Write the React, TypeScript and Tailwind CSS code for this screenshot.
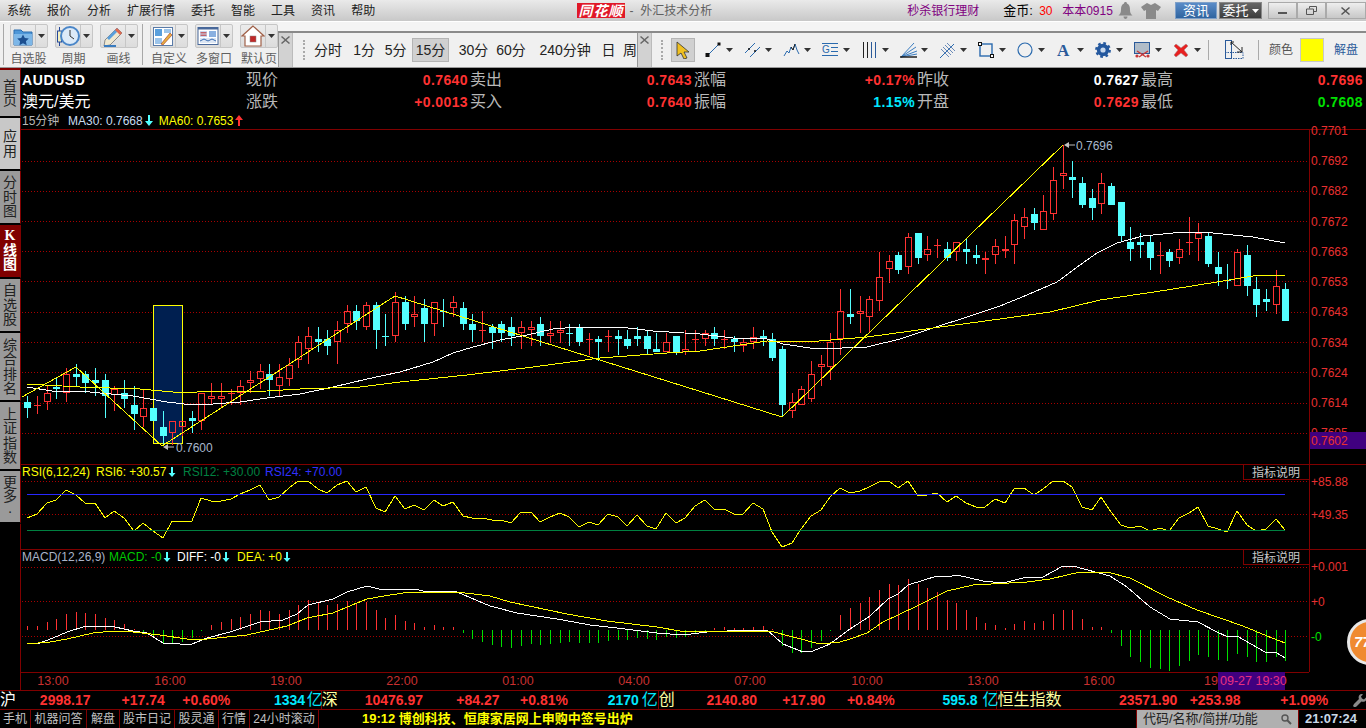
import React from "react";

// [type 0 red hollow / 1 cyan filled, bodyTop, bodyBottom, wickTop, wickBottom]
const C: number[][] = [
[1,402,408,396,418],[0,405,405,396,414],[0,393,402,386,410],[1,387,389,377,399],[0,374,393,368,402],[1,374,377,364,386],[1,374,383,371,393],[1,380,383,368,396],[1,380,396,374,418],[0,389,395,386,411],
[1,393,399,380,408],[1,405,414,386,430],[0,408,417,390,427],[1,408,421,408,421],[1,427,436,411,446],[0,421,433,421,445],[0,421,427,421,436],[1,418,421,411,433],[0,393,421,393,430],[0,396,399,383,405],
[0,396,399,383,408],[0,393,393,389,405],[0,386,393,380,405],[0,380,383,371,393],[0,371,379,364,389],[1,374,380,364,396],[0,377,386,364,396],[0,365,379,358,386],[0,342,360,336,368],[0,336,349,327,364],
[1,339,342,327,352],[1,339,346,330,355],[0,330,342,321,364],[0,311,324,305,333],[1,311,321,305,330],[0,305,327,302,330],[1,305,330,302,349],[1,336,336,314,346],[0,302,336,292,342],[1,302,324,296,330],
[0,314,317,296,327],[1,308,324,299,342],[0,302,324,302,336],[1,311,311,299,327],[0,302,308,296,317],[1,308,324,302,330],[1,324,330,314,342],[0,330,330,311,342],[1,327,333,324,349],[1,324,333,321,342],
[1,327,336,317,346],[0,327,333,321,349],[0,327,330,321,346],[1,324,336,317,346],[0,333,336,321,343],[0,330,333,321,343],[1,333,333,324,346],[1,327,342,324,346],[0,339,339,333,355],[1,339,342,336,361],
[0,336,336,330,352],[1,336,339,330,355],[1,339,346,330,349],[1,336,339,327,346],[1,336,349,330,355],[1,349,352,333,352],[0,342,352,333,352],[1,336,352,336,355],[0,349,352,330,355],[0,339,339,330,352],
[0,333,339,330,346],[1,333,339,327,346],[0,339,339,330,349],[1,339,342,336,352],[0,342,346,339,352],[0,337,342,327,349],[1,336,339,330,346],[1,339,358,333,361],[1,349,405,346,417],[0,402,411,393,418],
[0,389,405,386,405],[0,374,399,361,402],[0,364,367,355,386],[0,342,367,333,380],[0,311,339,289,355],[1,314,317,289,324],[0,311,314,296,333],[0,299,317,296,333],[0,277,301,252,311],[0,261,269,255,283],
[1,255,270,252,274],[0,237,267,233,274],[1,233,258,233,264],[0,249,255,236,261],[0,245,245,239,258],[1,249,258,242,261],[0,242,252,242,261],[1,249,252,239,264],[1,255,258,245,264],[0,258,260,252,274],
[0,246,255,239,264],[0,249,251,236,258],[0,220,245,214,264],[0,217,227,208,239],[1,214,223,208,230],[0,211,230,195,230],[0,180,214,167,220],[0,173,176,145,189],[1,177,180,161,198],[1,183,205,177,208],
[1,198,208,189,220],[0,183,204,173,214],[1,186,205,183,205],[1,202,236,202,241],[1,242,249,227,261],[1,242,245,233,258],[1,242,258,236,270],[0,255,255,242,274],[1,252,261,249,267],[0,249,258,239,264],
[0,242,242,217,255],[0,233,239,223,261],[1,236,264,233,267],[1,267,274,252,286],[1,280,280,264,289],[0,252,286,249,286],[1,255,286,245,296],[1,289,305,277,317],[1,299,302,289,311],[0,286,305,270,314],
[1,289,321,283,321],
];

const RSI = [518,514,503,500,490,495,503,503,518,511,518,531,523,531,538,521,521,521,498,501,501,499,494,490,485,500,497,488,481,481,489,493,485,481,492,487,508,512,496,509,505,510,500,506,502,516,518,518,520,520,523,512,512,522,517,513,517,527,522,525,514,517,526,515,526,529,513,523,518,506,500,509,509,514,514,503,509,532,547,543,529,516,510,497,488,493,491,487,482,481,488,481,496,495,493,502,496,503,507,507,499,503,489,488,495,489,481,481,487,507,510,497,512,525,528,526,531,528,531,518,513,507,526,529,532,511,525,531,529,519,530];

// signed heights from the baseline at y=630: positive red, negative green
const H = [4,4,8,11,16,18,17,16,12,10,6,1,-4,-6,-13,-13,-12,-8,-1,5,8,11,13,16,20,19,16,20,25,30,28,25,26,29,26,28,20,12,15,9,7,3,5,3,3,-3,-9,-12,-15,-17,-18,-16,-14,-15,-14,-13,-12,-13,-13,-13,-11,-10,-10,-8,-9,-10,-7,-8,-7,-4,-1,2,3,2,2,3,4,1,-16,-23,-23,-18,-11,-1,15,22,27,33,40,46,45,51,46,42,38,30,27,20,13,7,5,2,6,9,7,9,16,20,20,11,3,3,-3,-16,-27,-32,-38,-39,-41,-36,-31,-25,-27,-30,-31,-24,-27,-32,-32,-27,-31];

const MA30 = "27,387 52,391 80,391 100,393 133,396 167,402 193,405 213,404 240,402 267,398 300,394 333,387 367,379 400,372 433,362 453,353 473,347 500,340 527,335 553,329 577,327 620,327 653,331 700,334 733,338 767,339 783,344 817,349 867,347 900,339 933,328 967,317 1000,306 1027,295 1057,282 1080,265 1097,253 1117,243 1143,236 1183,232 1213,233 1253,237 1285,243";
const MA60 = "27,384 80,387 140,389 173,392 197,392 267,391 300,389 360,387 400,382 467,375 533,367 600,358 667,353 700,351 767,341 807,342 867,337 933,328 1000,319 1050,312 1100,300 1167,290 1217,282 1253,276 1285,275";
const ZIG = "22,397 76,367 162,446 395,296 782,417 1063,145";
const DIFF = "27,643 40,643 53,638 67,632 83,627 95,626 115,627 133,631 147,633 163,643 180,644 192,644 207,638 230,632 260,622 283,620 297,614 308,605 333,599 347,592 367,586 383,590 390,589 415,589 423,591 433,591 457,592 490,606 517,613 537,616 563,620 590,625 617,628 657,633 683,635 707,632 747,630 767,630 783,644 803,652 813,651 830,644 850,629 870,616 888,599 898,594 908,585 937,576 947,577 957,575 983,581 1003,583 1023,578 1043,577 1063,566 1073,566 1110,576 1127,587 1150,607 1170,619 1198,622 1217,632 1228,637 1237,636 1265,652 1277,653 1285,658";
const DEA = "27,644 50,642 67,639 93,633 113,631 133,632 160,635 187,639 207,639 247,635 287,626 307,618 333,613 357,603 367,599 390,595 410,592 457,592 490,596 510,602 567,614 607,621 657,627 680,631 770,631 793,637 820,644 840,642 850,639 867,633 883,622 917,606 947,591 973,585 1027,582 1050,579 1080,572 1107,572 1130,578 1167,597 1197,610 1243,626 1267,636 1285,643";

const cx = (i: number) => Math.round(27.3 + i * 9.677);
const RED = "#ff3232";
const CYAN = "#54ffff";
const DARK = "#800000";
const DOT = "#a80000";

function Arrow({ x, y, color, up = false }: { x: number; y: number; color: string; up?: boolean }) {
  const d = up
    ? `M${x} ${y - 5}l3.5 4h-2.5v6h-2v-6h-2.5z`
    : `M${x} ${y + 5}l3.5 -4h-2.5v-6h-2v6h-2.5z`;
  return <path d={d} fill={color} />;
}

function Chart() {
  const axis: [string, number][] = [["0.7701", 130], ["0.7692", 160], ["0.7682", 190], ["0.7672", 221], ["0.7663", 251], ["0.7653", 281], ["0.7643", 311], ["0.7634", 342], ["0.7624", 372], ["0.7614", 402]];
  const grid = [161, 191, 221, 251, 281, 312, 342, 372, 403, 433];
  const times: [string, number][] = [["13:00", 53], ["16:00", 170], ["19:00", 286], ["22:00", 402], ["01:00", 518], ["04:00", 634], ["07:00", 750], ["10:00", 867], ["13:00", 983], ["16:00", 1099]];
  return (
    <svg viewBox="21 129 1345 561" width={1345} height={561} className="block overflow-visible" fontSize={12}>
      <g shapeRendering="crispEdges" strokeWidth={1}>
        {grid.map((y) => <line key={y} x1={22} x2={1309} y1={y + 0.5} y2={y + 0.5} stroke={DOT} strokeDasharray="1 2" />)}
        {[481, 514, 567, 601, 636].map((y) => <line key={y} x1={22} x2={1309} y1={y + 0.5} y2={y + 0.5} stroke={DOT} strokeDasharray="1 2" />)}
        {[129, 464, 549, 672].map((y) => <line key={y} x1={21} x2={y === 672 ? 1309 : 1366} y1={y + 0.5} y2={y + 0.5} stroke={DARK} />)}
        <line x1={1309.5} x2={1309.5} y1={129} y2={672} stroke={DARK} />
      </g>
      <rect x={153.5} y={305.5} width={29} height={138} fill="#001f50" stroke="#ffff00" shapeRendering="crispEdges" />
      <g shapeRendering="crispEdges">
        {C.map(([t, a, b, w1, w2], i) => {
          const x = cx(i);
          const col = t ? CYAN : RED;
          const doji = a === b;
          return (
            <g key={i}>
              {w1 < a && <rect x={x} y={w1} width={1} height={a - w1} fill={col} />}
              {w2 > b && <rect x={x} y={b} width={1} height={w2 - b} fill={col} />}
              {doji ? (
                <rect x={x - 3} y={a} width={7} height={1} fill={col} />
              ) : t ? (
                <rect x={x - 3} y={a} width={7} height={b - a} fill={col} />
              ) : (
                <rect x={x - 2.5} y={a + 0.5} width={6} height={b - a - 1} fill="none" stroke={col} />
              )}
            </g>
          );
        })}
      </g>
      <g fill="none" shapeRendering="crispEdges">
        <polyline points={MA30} stroke="#ffffff" />
        <polyline points={MA60} stroke="#ffff00" />
        <polyline points={ZIG} stroke="#ffff00" />
      </g>
      <g fill="#a8b8cc" stroke="none">
        <path d="M1064 145l5 -3v2.5h6v1h-6v2.5z" fill="#c0c0c0" />
        <text x={1076} y={149.5}>0.7696</text>
        <path d="M163 447l5 -3v2.5h6v1h-6v2.5z" fill="#c0c0c0" />
        <text x={176} y={451.5}>0.7600</text>
      </g>
      <text x={1311} y={437} fill="#e83030">0.7605</text>
      <rect x={1310} y={432} width={56} height={17} fill="#400080" />
      <g fill="#e83030">
        {axis.map(([t, y]) => <text key={t} x={1311} y={y + 4.5}>{t}</text>)}
        <text x={1311} y={445}>0.7602</text>
        <text x={1311} y={485.5}>+85.88</text>
        <text x={1311} y={518.5}>+49.35</text>
        <text x={1311} y={570.5}>+0.001</text>
        <text x={1311} y={605.5}>+0</text>
      </g>
      <text x={1311} y={640.5} fill="#00e000">-0</text>

      <rect x={1243.5} y={464.5} width={66} height={15} fill="#000" stroke={DARK} shapeRendering="crispEdges" />
      <text x={1252} y={477} fill="#c8c8c8">指标说明</text>
      <rect x={1243.5} y={549.5} width={66} height={15} fill="#000" stroke={DARK} shapeRendering="crispEdges" />
      <text x={1252} y={562} fill="#c8c8c8">指标说明</text>

      <polyline points={RSI.map((y, i) => `${cx(i)},${y}`).join(" ")} fill="none" stroke="#ffff00" shapeRendering="crispEdges" />
      <g shapeRendering="crispEdges">
        <line x1={27} x2={1285} y1={494.5} y2={494.5} stroke="#2828ff" />
        <line x1={27} x2={1285} y1={530.5} y2={530.5} stroke="#008040" />
      </g>
      <text x={22} y={476} fill="#ffff00">RSI(6,12,24)</text>
      <text x={96} y={476} fill="#ffff00">RSI6: +30.57</text>
      <Arrow x={172} y={472} color={CYAN} />
      <text x={183} y={476} fill="#008040">RSI12: +30.00</text>
      <text x={265} y={476} fill="#3030ff">RSI24: +70.00</text>

      <g shapeRendering="crispEdges">
        {H.map((h, i) =>
          h >= 0 ? (
            <rect key={i} x={cx(i)} y={630 - h} width={1} height={h} fill={RED} />
          ) : (
            <rect key={i} x={cx(i)} y={630} width={1} height={-h} fill="#00e000" />
          )
        )}
        <polyline points={DIFF} fill="none" stroke="#ffffff" />
        <polyline points={DEA} fill="none" stroke="#ffff00" />
      </g>
      <text x={22} y={561} fill="#aab4c8">MACD(12,26,9)</text>
      <text x={109} y={561} fill="#00c800">MACD: -0</text>
      <Arrow x={167} y={557} color={CYAN} />
      <text x={177} y={561} fill="#ffffff">DIFF: -0</text>
      <Arrow x={226} y={557} color={CYAN} />
      <text x={237} y={561} fill="#ffff00">DEA: +0</text>
      <Arrow x={287} y={557} color={CYAN} />

      <g fill="#c83030" textAnchor="middle" fontSize={12.5}>
        {times.map(([t, x]) => <text key={x} x={x} y={685}>{t}</text>)}
        <text x={1204} y={685} textAnchor="start">19:</text>
      </g>
      <rect x={1218} y={672} width={67} height={18} fill="#400080" />
      <text x={1220} y={685} fill="#e83080" fontSize={12.5}>09-27 19:30</text>
    </svg>
  );
}

const Caret = () => <svg width={7} height={4} viewBox="0 0 7 4"><path d="M0 0h7l-3.5 4z" fill="#333" /></svg>;

function BigButton({ icon, label }: { icon: React.ReactNode; label: string }) {
  return (
    <div className="flex flex-col items-center w-[38px]">
      <div className="flex h-[25px] w-[38px] border border-[#c6c6c6] rounded-[2px] bg-gradient-to-b from-[#ececec] to-[#dcdcdc]">
        <div className="w-[25px] flex items-center justify-center border-r border-[#c6c6c6]">{icon}</div>
        <div className="flex-1 flex items-center justify-center"><Caret /></div>
      </div>
      <div className="mt-[3px] text-[12px] leading-[16px] text-[#606060] whitespace-nowrap">{label}</div>
    </div>
  );
}

const IconFolder = (
  <svg width={22} height={21} viewBox="0 0 22 21"><path d="M2 4h7l2 2h9v13H2z" fill="#4e97d8" stroke="#2a6cae" /><path d="M2 8h18v11H2z" fill="#7db7e8" /><path d="M11 8.5l1.8 3.6 4 .5-2.9 2.7.8 3.9-3.7-2-3.6 2 .7-3.9-2.9-2.7 4-.5z" fill="#1c4f90" /></svg>
);
const IconClock = (
  <svg width={24} height={22} viewBox="0 0 24 22"><rect x={1.5} y={6} width={4} height={11} fill="#f4f0c0" stroke="#24489a" /><path d="M3.5 2v4M3.5 17v4" stroke="#24489a" /><circle cx={14} cy={11} r={9} fill="#dceaf8" stroke="#4a86c8" strokeWidth={2} /><path d="M14 5v6l4 3" fill="none" stroke="#333" /></svg>
);
const IconPen = (
  <svg width={22} height={21} viewBox="0 0 22 21"><path d="M3 14L15 2l5 5L8 19l-6 1z" fill="#f0e8d0" stroke="#8a8a8a" /><path d="M5 12L15 2l2 2L7 14z" fill="#5a9fdc" /><path d="M15 2l5 5-2 2-5-5z" fill="#e06a50" /><path d="M2 20h12" stroke="#3a7cc0" strokeWidth={2} /></svg>
);
const IconCustom = (
  <svg width={22} height={21} viewBox="0 0 22 21"><rect x={1.5} y={1.5} width={19} height={18} fill="#fff" stroke="#5a7ba8" /><rect x={3} y={3} width={7} height={7} fill="#5a9fdc" /><rect x={12} y={3} width={7} height={4} fill="#9cc4ea" /><rect x={3} y={12} width={7} height={6} fill="#9cc4ea" /><path d="M9 18l9-11 2 2-9 10z" fill="#e8b040" stroke="#a03020" strokeWidth={0.6} /></svg>
);
const IconWindows = (
  <svg width={22} height={20} viewBox="0 0 22 20"><rect x={1} y={1.5} width={20} height={17} fill="#fff" stroke="#48689a" /><rect x={1} y={1.5} width={20} height={2} fill="#48689a" /><rect x={3} y={5} width={7} height={6} fill="#c8d8f0" /><path d="M3.5 6.5h6M3.5 8h6M3.5 9.5h6" stroke="#c03030" strokeWidth={0.7} /><rect x={12} y={5} width={7} height={6} fill="#8ab0e0" /><rect x={3} y={12} width={16} height={5} fill="#dce6f4" /><path d="M3 15l4-2 4 2 4-2 4 2" stroke="#3a6cb0" fill="none" /></svg>
);
const IconHome = (
  <svg width={24} height={22} viewBox="0 0 24 22"><path d="M12 1L1 11h3v10h16V11h3z" fill="#fff" stroke="#a06048" strokeWidth={1.2} /><rect x={9} y={11} width={6} height={6} fill="#c02828" stroke="#888" strokeWidth={0.5} /></svg>
);

const tools: React.ReactNode[] = [
  <svg width={17} height={16} viewBox="0 0 17 16" key="a"><path d="M3 13L14 2" stroke="#2a6aae" /><rect x={0.5} y={11} width={4} height={4} fill="#111" /><rect x={12.5} y={0.5} width={3} height={3} fill="#111" /></svg>,
  <svg width={17} height={16} viewBox="0 0 17 16" key="b"><path d="M1 11L11 1M6 15L16 5" stroke="#2a6aae" /><circle cx={5} cy={7} r={1} fill="#111" /><circle cx={11} cy={9} r={1} fill="#111" /></svg>,
  <svg width={17} height={16} viewBox="0 0 17 16" key="c"><path d="M1 14L4 9l2 2 2-6 2 3 2-6 2 6 2 4" fill="none" stroke="#2a6aae" /><path d="M8 5l2 3 2-6" fill="none" stroke="#222" /></svg>,
  <svg width={16} height={16} viewBox="0 0 16 16" key="d"><path d="M0 1.5h16M9 5.5h7M9 9.5h7M0 13.5h16" stroke="#2a6aae" /><text x={0} y={11} fontSize={10} fill="#2a6aae">G</text></svg>,
  <svg width={15} height={16} viewBox="0 0 15 16" key="e"><path d="M1.5 0v16M5.5 0v16" stroke="#222" /><path d="M9.5 0v16M13.5 0v16" stroke="#2a5a9a" /></svg>,
  <svg width={17} height={16} viewBox="0 0 17 16" key="f"><path d="M1 15L14 1M1 15L16 5M1 15L17 9M1 15L17 12" stroke="#3a7cc0" /><path d="M0 15h17" stroke="#111" strokeWidth={1.4} /></svg>,
  <svg width={17} height={17} viewBox="0 0 17 17" key="g"><path d="M1 16L15 2" stroke="#2a6aae" /><path d="M4 5l8 8M6 3l8 8M8 1l8 8M2 7l8 8" stroke="#6a8ab8" /></svg>,
  <svg width={16} height={16} viewBox="0 0 16 16" key="h"><rect x={2} y={2} width={12} height={12} fill="none" stroke="#2a6aae" strokeWidth={1.4} /><rect x={0.5} y={0.5} width={3} height={3} fill="#fff" stroke="#111" /><rect x={12.5} y={12.5} width={3} height={3} fill="#fff" stroke="#111" /></svg>,
  <svg width={16} height={16} viewBox="0 0 16 16" key="i"><circle cx={8} cy={8} r={7} fill="none" stroke="#2a6aae" strokeWidth={1.2} /></svg>,
  <svg width={16} height={18} viewBox="0 0 16 18" key="j"><text x={1} y={15} fontSize={17} fontWeight={700} fontFamily="'Liberation Serif',serif" fill="#2a5a9a">A</text></svg>,
  <svg width={16} height={16} viewBox="0 0 16 16" key="k"><circle cx={8} cy={8} r={6.2} fill="#24589e" /><circle cx={8} cy={8} r={6.6} fill="none" stroke="#24589e" strokeWidth={2.6} strokeDasharray="2.6 2.6" /><circle cx={8} cy={8} r={2.6} fill="#c8d8ec" /></svg>,
  <svg width={17} height={16} viewBox="0 0 17 16" key="l"><rect x={0.5} y={0.5} width={15} height={11} fill="#b0bcc8" stroke="#2a5a9a" /><path d="M3 9l9 6M14 9l-9 6" stroke="#c83838" strokeWidth={1.5} /><circle cx={3} cy={14} r={1.6} fill="#c83838" /><circle cx={14} cy={14} r={1.6} fill="#c83838" /></svg>,
  <svg width={16} height={16} viewBox="0 0 16 16" key="m"><path d="M3 2l5 4 5-4 2 2-4 4 4 5-2 2-5-4-5 4-2-2 4-5-4-4z" fill="#e82020" stroke="#a08080" strokeWidth={0.5} /></svg>,
];

const stats: [string, string][] = [
  ["沪", "w-[40px] text-[16px] font-normal text-white"],
  ["2998.17", "w-[82px]"],
  ["+17.74", "w-[61px]"],
  ["+0.60%", "w-[92px]"],
  ["1334", "w-[33px] text-[#00e8ff]"],
  ["亿", "w-[15px] text-[16px] font-normal text-[#00e8ff] border-r border-[#800000]"],
  ["深", "w-[43px] text-[16px] font-normal text-[#ffffa0]"],
  ["10476.97", "w-[92px]"],
  ["+84.27", "w-[64px]"],
  ["+0.81%", "w-[88px]"],
  ["2170", "w-[34px] text-[#00e8ff]"],
  ["亿", "w-[17px] text-[16px] font-normal text-[#00e8ff] border-r border-[#800000]"],
  ["创", "w-[48px] text-[16px] font-normal text-[#ffffa0]"],
  ["2140.80", "w-[76px]"],
  ["+17.90", "w-[65px]"],
  ["+0.84%", "w-[96px]"],
  ["595.8", "w-[40px] text-[#00e8ff]"],
  ["亿", "w-[15px] text-[16px] font-normal text-[#00e8ff] border-r border-[#800000]"],
  ["恒生指数", "w-[122px] text-[16px] font-normal text-[#ffffa0]"],
  ["23571.90", "w-[71px]"],
  ["+253.98", "w-[91px]"],
  ["+1.09%", "w-[66px]"],
];

const tabs: [string, string][] = [
  ["手机", "w-[31px]"],
  ["机器问答", "w-[56px]"],
  ["解盘", "w-[33px]"],
  ["股市日记", "w-[55px]"],
  ["股灵通", "w-[44px]"],
  ["行情", "w-[31px]"],
  ["24小时滚动", "w-[69px]"],
];

function SideTab({ text, cls }: { text: string; cls: string }) {
  return (
    <div className={`flex flex-col items-center justify-center text-[14px] leading-[14.5px] border-r border-[#800000] border-b-2 border-b-black ${cls}`}>
      {Array.from(text).map((c, i) => <span key={i}>{c}</span>)}
    </div>
  );
}

function QCell({ label, value, color }: { label: string; value: string; color: string }) {
  return (
    <div className="flex items-center justify-between pr-[2px]">
      <span className="text-[16px] text-[#b8b8b8]">{label}</span>
      <span className={`text-[14px] font-bold tracking-[0.4px] ${color}`}>{value}</span>
    </div>
  );
}

export default function App() {
  return (
    <div className="relative w-[1366px] h-[728px] overflow-hidden bg-black flex flex-col font-['Liberation_Sans','Noto_Sans_CJK_SC',sans-serif]">
      {/* title / menu bar */}
      <div className="h-[21px] flex items-center bg-gradient-to-b from-[#eaeaea] to-[#c8c8c8] text-[12px] text-[#222]">
        <div className="flex gap-4 pl-[7px] w-[577px]">
          {["系统", "报价", "分析", "扩展行情", "委托", "智能", "工具", "资讯", "帮助"].map((m) => <span key={m}>{m}</span>)}
        </div>
        <span className="w-[49px] h-[15px] flex items-center justify-center bg-[#e01828] text-white italic font-bold text-[14px] leading-none tracking-[1px]">同花顺</span>
        <span className="ml-[4px] w-[278px] text-[12px] text-[#606060] whitespace-pre">-  外汇技术分析</span>
        <span className="w-[96px] text-[#800080] text-[12px]">秒杀银行理财</span>
        <span className="w-[36px] text-black text-[13px] whitespace-nowrap">金币:</span>
        <span className="w-[23px] text-[#ff0000] text-[12px]">30</span>
        <span className="w-[56px] text-[#800080] text-[12px] whitespace-nowrap">本本0915</span>
        <svg width={15} height={17} viewBox="0 0 15 17" className="mr-[8px]"><path d="M7.5 0c1 0 1.5.6 1.5 1.5C11.500 2.500 12 5 12 8c0 3 1 4 2.500 5.500H.5C2 12 3 11 3 8c0-3 .5-5.500 3-6.500C6 .6 6.500 0 7.500 0zM5.500 14.500h4c0 1.500-1 2.500-2 2.500s-2-1-2-2.500z" fill="#8a8a8a" /></svg>
        <svg width={20} height={16} viewBox="0 0 20 16" className="mr-[14px]"><path d="M6 0l4 2 4-2 6 4-3 4-2-1v9H5V7L3 8 0 4z" fill="#8a8a8a" /></svg>
        <div className="w-[42px] h-[17px] flex items-center justify-center bg-gradient-to-b from-[#5a8cc8] to-[#2f649f] border border-[#7fa0c8] text-white text-[13px] mr-[2px]">资讯</div>
        <div className="w-[43px] h-[17px] flex items-center justify-center gap-[3px] bg-gradient-to-b from-[#666666] to-[#3c3c3c] border border-[#888] text-white text-[13px] mr-[6px]">
          委托<svg width={7} height={4} viewBox="0 0 7 4"><path d="M0 0h7l-3.500 4z" fill="#fff" /></svg>
        </div>
        <div className="flex h-[17px]">
          <div className="w-[29px] flex items-center justify-center border border-[#aaa] bg-gradient-to-b from-[#eeeeee] to-[#c8c8c8]"><div className="w-[9px] h-[2px] mt-[5px] bg-[#555]" /></div>
          <div className="w-[29px] flex items-center justify-center border border-[#aaa] bg-gradient-to-b from-[#eeeeee] to-[#c8c8c8]"><svg width={11} height={9} viewBox="0 0 11 9"><path d="M3.500 2.500V.5h7v5h-3M.5 3h7v5.500h-7z" fill="none" stroke="#555" /></svg></div>
          <div className="w-[40px] flex items-center justify-center border border-[#aaa] bg-gradient-to-b from-[#eeeeee] to-[#c8c8c8]"><svg width={9} height={8} viewBox="0 0 9 8"><path d="M1 0l3.500 3L8 0l1 1-3.500 3L9 7l-1 1-3.500-3L1 8 0 7l3.500-3L0 1z" fill="#555" /></svg></div>
        </div>
      </div>

      {/* tool bars */}
      <div className="h-[47px] flex bg-[#f4f4f4] border-t border-white border-b border-b-[#9a9a9a]">
        <div className="w-[278px] flex pl-[3px] pt-[2px] gap-[7px] bg-[#f0f0f0]">
          <div className="w-px bg-[#a8a8a8] h-[41px] mr-[-1px]" />
          <BigButton icon={IconFolder} label="自选股" />
          <BigButton icon={IconClock} label="周期" />
          <BigButton icon={IconPen} label="画线" />
          <div className="w-px bg-[#a8a8a8] h-[41px] ml-[-3px] mr-px" />
          <BigButton icon={IconCustom} label="自定义" />
          <BigButton icon={IconWindows} label="多窗口" />
          <BigButton icon={IconHome} label="默认页" />
        </div>
        <div className="flex-1 flex flex-col">
          <div className="h-[9px] bg-[#f4f4f4]" />
          <div className="flex-1 flex bg-[#f0f0f0] border-t-2 border-[#8a8a8a]">
            <div className="w-[359px] flex items-center border-l border-[#999]">
              <div className="w-[14px] h-full flex justify-center pt-[3px] bg-[#d2d2d2] border-r border-[#bbb]">
                <svg width={9} height={8} viewBox="0 0 9 8"><path d="M1 0l3.500 3L8 0l1 1-3.500 3L9 7l-1 1-3.500-3L1 8 0 7l3.500-3L0 1z" fill="#666" /></svg>
              </div>
              <div className="ml-[10px] w-[2px] h-[20px] border-l-2 border-dotted border-[#aaa]" />
              <div className="flex items-center text-[14px] text-[#222] ml-[9px] whitespace-nowrap overflow-hidden w-[324px]">
                <span className="w-[40px]">分时</span>
                <span className="w-[32px]">1分</span>
                <span className="w-[28px]">5分</span>
                <span className="w-[37px] h-[24px] mr-[10px] flex items-center justify-center bg-[#d0d0d0] border border-[#b4b4b4]">15分</span>
                <span className="w-[38px]">30分</span>
                <span className="w-[44px]">60分</span>
                <span className="w-[63px]">240分钟</span>
                <span className="w-[22px]">日</span>
                <span>周</span>
              </div>
            </div>
            <div className="flex-1 flex items-center border-l border-[#999]">
              <div className="w-[14px] h-full flex justify-center pt-[3px] bg-[#d2d2d2] border-r border-[#bbb]">
                <svg width={9} height={8} viewBox="0 0 9 8"><path d="M1 0l3.500 3L8 0l1 1-3.500 3L9 7l-1 1-3.500-3L1 8 0 7l3.500-3L0 1z" fill="#666" /></svg>
              </div>
              <div className="ml-[9px] w-[2px] h-[20px] border-l-2 border-dotted border-[#aaa]" />
              <div className="ml-[8px] w-[24px] h-[24px] flex items-center justify-center bg-[#d0d0d0] border border-[#b4b4b4]">
                <svg width={14} height={18} viewBox="0 0 14 18"><path d="M1 1l12 10H8l3 6-3 1-3-6-4 3z" fill="#f0c020" stroke="#333" strokeWidth={0.8} /></svg>
              </div>
              <div className="flex ml-[7px]">
                {tools.map((t) => (
                  <div key={(t as React.ReactElement).key} className="w-[39px] flex items-center gap-[2px]">
                    <div className="w-[22px] flex justify-center">{t}</div>
                    <Caret />
                  </div>
                ))}
              </div>
              <div className="w-px h-[20px] bg-[#aaa] ml-[-1px]" />
              <svg width={19} height={20} viewBox="0 0 19 20" className="ml-[16px]"><rect x={0.5} y={0.5} width={6} height={18} fill="none" stroke="#2a5a9a" /><path d="M0 12.500h18v6H0" fill="none" stroke="#2a5a9a" strokeDasharray="1.500 1" /><path d="M6 2l11 10M17 7v5h-5M6 2v3M6 2h3" fill="none" stroke="#222" /></svg>
              <div className="w-px h-[20px] bg-[#aaa] ml-[14px]" />
              <span className="ml-[10px] text-[12px] text-[#555] whitespace-nowrap">颜色</span>
              <div className="ml-[7px] w-[24px] h-[24px] bg-[#ffff00] border border-[#c8c8c8]" />
              <span className="ml-[10px] text-[12px] text-[#2a5a9a] whitespace-nowrap">解盘</span>
            </div>
          </div>
        </div>
      </div>

      {/* main */}
      <div className="flex flex-1 min-h-0">
        <div className="w-[21px] flex flex-col shrink-0 text-[#222] border-t-2 border-[#800000]">
          <SideTab text="首页" cls="h-[48px] bg-[#a8a8a8]" />
          <SideTab text="应用" cls="h-[53px] bg-[#c8c8c8]" />
          <SideTab text="分时图" cls="h-[54px] bg-[#9a9a9a]" />
          <SideTab text="K线图" cls="h-[54px] bg-[#800000] text-white font-bold font-['Liberation_Serif','Noto_Sans_CJK_SC',serif]" />
          <SideTab text="自选股" cls="h-[54px] bg-[#9a9a9a]" />
          <SideTab text="综合排名" cls="h-[69px] bg-[#9a9a9a]" />
          <SideTab text="上证指数" cls="h-[69px] bg-[#9a9a9a]" />
          <SideTab text="更多·" cls="h-[53px] bg-[#9a9a9a]" />
          <div className="flex-1 border-r border-[#800000]" />
        </div>
        <div className="flex flex-col flex-1 min-w-0">
          <div className="h-[61px] flex flex-col">
            <div className="grid grid-cols-[225px_224px_224px_223px_224px_224px] h-[45px] pt-[1px] grid-rows-2 items-center">
              <div className="pl-px text-[14px] font-bold text-white tracking-[0.6px]">AUDUSD</div>
              <QCell label="现价" value="0.7640" color="text-[#ff3232]" />
              <QCell label="卖出" value="0.7643" color="text-[#ff3232]" />
              <QCell label="涨幅" value="+0.17%" color="text-[#ff3232]" />
              <QCell label="昨收" value="0.7627" color="text-white" />
              <QCell label="最高" value="0.7696" color="text-[#ff3232]" />
              <div className="pl-px text-[16px] text-white">澳元/美元</div>
              <QCell label="涨跌" value="+0.0013" color="text-[#ff3232]" />
              <QCell label="买入" value="0.7640" color="text-[#ff3232]" />
              <QCell label="振幅" value="1.15%" color="text-[#00e8ff]" />
              <QCell label="开盘" value="0.7629" color="text-[#ff3232]" />
              <QCell label="最低" value="0.7608" color="text-[#00e000]" />
            </div>
            <div className="flex items-center h-[16px] pb-px pl-px text-[12px] whitespace-nowrap">
              <span className="w-[46px] text-[#b8b8b8]">15分钟</span>
              <span className="text-[#c8dcf0]">MA30: 0.7668</span>
              <svg width={8} height={11} viewBox="0 0 8 11" className="ml-[2px] mr-[6px]"><path d="M4 11l4-5H5V0H3v6H0z" fill="#54ffff" /></svg>
              <span className="text-[#ffff00]">MA60: 0.7653</span>
              <svg width={8} height={11} viewBox="0 0 8 11" className="ml-[2px]"><path d="M4 0l4 5H5v6H3V5H0z" fill="#ff3232" /></svg>
            </div>
          </div>
          <Chart />
        </div>
      </div>

      {/* index row */}
      <div className="h-[19px] flex items-center border-t border-[#800000] text-[14px] font-bold text-[#ff3232] whitespace-nowrap">
        {stats.map(([t, cls], i) => <span key={i} className={`leading-[18px] ${cls}`}>{t}</span>)}
        <svg width={14} height={14} viewBox="0 0 14 14" className="ml-[6px]"><path d="M1 13l1-2 5-5c-1-2 0-5 3-5l1 .5-2 2 1 2 2 1 2-2 .5 1c0 3-3 4-5 3l-5 5-2 1z" fill="#8a8a8a" /></svg>
      </div>

      {/* bottom row */}
      <div className="h-[19px] flex items-center border-t border-[#800000] text-[12px] text-[#c0c0c0] whitespace-nowrap">
        {tabs.map(([t, w]) => <span key={t} className={`h-full flex items-center justify-center border-r border-[#800000] ${w}`}>{t}</span>)}
        <span className="ml-[43px] w-[774px] font-bold text-[13px] text-[#ffff00]">19:12 博创科技、恒康家居网上申购中签号出炉</span>
        <div className="w-[163px] h-full flex items-center justify-between px-[6px] bg-[#b0b0b0] border-x border-[#800000] text-[13px] text-[#222]">
          代码/名称/简拼/功能
          <svg width={11} height={11} viewBox="0 0 11 11"><circle cx={4} cy={4} r={3} fill="none" stroke="#555" strokeWidth={1.4} /><path d="M6 6l4 4" stroke="#555" strokeWidth={2} /></svg>
        </div>
        <span className="ml-[6px] text-[13px] font-bold text-[#c8d8e8]">21:07:24</span>
      </div>

      {/* floating badge */}
      <div className="absolute left-[1347px] top-[619px] w-[46px] h-[46px] rounded-full bg-[#f08a30] border-[3px] border-[#e8e8e8] flex items-center pl-[4px] text-white font-bold italic text-[15px]">77</div>
    </div>
  );
}
